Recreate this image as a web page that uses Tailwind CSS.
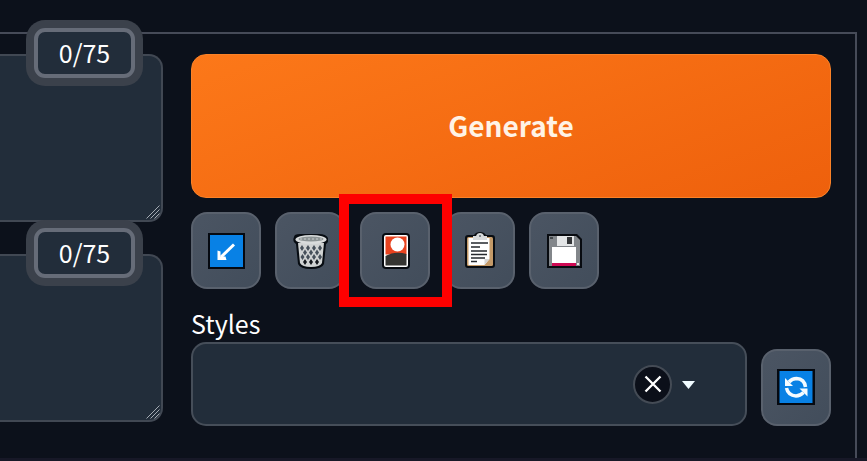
<!DOCTYPE html>
<html lang="en">
<head>
<meta charset="utf-8">
<title>Generate</title>
<script src="https://cdn.jsdelivr.net/npm/@tailwindcss/browser@4"></script>
</head>
<body class="w-[867px] h-[461px] overflow-hidden bg-[#0c111b] text-white font-['Noto_Sans_CJK_SC','Noto_Sans',sans-serif]">
<div class="h-[461px] pt-8 pr-[10px] flex flex-col">
  <main class="h-[426px] border-t-2 border-r-2 border-[#464b58] pt-5 pr-6 flex gap-7">
    <section class="w-[163px] shrink-0 flex flex-col gap-8">
      <div class="relative h-[168px] rounded-r-[14px] border-2 border-l-0 border-[#414853] bg-[#222d3a]">
        <svg class="absolute right-[1px] bottom-[1px] w-[14px] h-[14px]" viewBox="0 0 14 14" fill="none" stroke="#a5abb3" stroke-width="1"><path d="M0.5 13.5L13.5 .5M4.5 13.5L13.5 4.5M8.5 13.5L13.5 8.5"/></svg>
        <div class="absolute left-[34px] top-[-28px] w-[101px] h-[50px] rounded-[11px] border-4 border-[#666c78] bg-[#222d3a] shadow-[0_0_0_8px_#3b414b] flex items-center justify-center text-[25px] leading-none"><span class="-translate-y-px">0/75</span></div>
      </div>
      <div class="relative h-[168px] rounded-r-[14px] border-2 border-l-0 border-[#414853] bg-[#222d3a]">
        <svg class="absolute right-[1px] bottom-[1px] w-[14px] h-[14px]" viewBox="0 0 14 14" fill="none" stroke="#a5abb3" stroke-width="1"><path d="M0.5 13.5L13.5 .5M4.5 13.5L13.5 4.5M8.5 13.5L13.5 8.5"/></svg>
        <div class="absolute left-[34px] top-[-28px] w-[101px] h-[50px] rounded-[11px] border-4 border-[#666c78] bg-[#222d3a] shadow-[0_0_0_8px_#3b414b] flex items-center justify-center text-[25px] leading-none"><span class="-translate-y-px">0/75</span></div>
      </div>
    </section>
    <section class="w-[640px] shrink-0 flex flex-col">
      <button class="h-36 shrink-0 rounded-[15px] border border-[#fb8228] bg-linear-[160deg] from-[#fc7819] to-[#ee600c] pb-[3px] text-[28px] font-bold leading-none text-[#fff3e6]">Generate</button>
      <div class="mt-[14px] flex gap-[14.5px]">
        <button class="w-[70px] h-[77px] rounded-[16px] border-2 border-[#59616d] bg-linear-to-br from-[#4b5563] to-[#424d5b] flex items-center justify-center">
          <svg class="w-[38px] h-[38px]" viewBox="0 0 38 38"><path d="M1 1h37v36H1z" fill="#050910"/><path d="M3 3h33v32H3z" fill="#0881e5"/><path d="M27 12.500L14 25" fill="none" stroke="#fff" stroke-width="3"/><path d="M10.500 18.500l3 1v5h5l1 3.500h-9z" fill="#fff"/></svg>
        </button>
        <button class="-ml-[0.5px] mr-[0.5px] w-[70px] h-[77px] rounded-[16px] border-2 border-[#59616d] bg-linear-to-br from-[#4b5563] to-[#424d5b] flex items-center justify-center">
          <svg class="w-[38px] h-[38px] -translate-x-px" viewBox="0 0 38 38">
            <path d="M4 5Q4 2 10 2H29Q36 2 38 6Q39 10 36 12L34 32Q32 37 21 37Q10 37 8 32L6 12Q2 10 4 5Z" fill="#070c12"/>
            <path d="M8 11L10 31Q12 35 21 35Q30 35 32 31L34 11Z" fill="#d0d3d3"/>
            <g fill="#46505a"><path d="M12 13l2 3-2 3-2-3zm6 0l2 3-2 3-2-3zm6 0l2 3-2 3-2-3zm6 0l2 3-2 3-2-3zM15 17.500l2 3-2 3-2-3zm6 0l2 3-2 3-2-3zm6 0l2 3-2 3-2-3zM12.500 22l2 3-2 3-2-3zm5.500 0l2 3-2 3-2-3zm6 0l2 3-2 3-2-3zm6 0l2 3-2 3-2-3z"/></g>
            <path d="M15 27l2 3-2 3-2-3zm6 0l2 3-2 3-2-3zm6 0l2 3-2 3-2-3z" fill="#15191e"/>
            <ellipse cx="21" cy="7.500" rx="15.500" ry="4.500" fill="#d9dcdc"/><ellipse cx="21" cy="7" rx="12.500" ry="2.500" fill="#8d9495"/><path d="M10 7h22" stroke="#c8cccc" stroke-dasharray="2 2"/>
          </svg>
        </button>
        <button class="relative w-[70px] h-[77px] rounded-[16px] border-2 border-[#59616d] bg-linear-to-br from-[#4b5563] to-[#424d5b] flex items-center justify-center">
          <svg class="w-[38px] h-[38px] translate-x-px" viewBox="0 0 38 38">
            <rect x="5" y="1" width="28" height="36" rx="4" fill="#060a10"/><rect x="7" y="3" width="24" height="32" rx="2" fill="#fff"/><path d="M8.500 4.500h21v18h-21z" fill="#e8431f"/><path d="M8.500 24Q18 18.500 29.500 22V33.500h-21z" fill="#353532"/><circle cx="20.500" cy="12.500" r="7" fill="#fff"/>
          </svg>
          <span class="absolute z-10 left-[-23px] top-[-20px] w-[113px] h-[113px] border-[10px] border-[#fe0000]"></span>
        </button>
        <button class="w-[70px] h-[77px] rounded-[16px] border-2 border-[#59616d] bg-linear-to-br from-[#4b5563] to-[#424d5b] flex items-center justify-center">
          <svg class="w-[38px] h-[38px] -translate-x-px" viewBox="0 0 38 38">
            <path d="M8 3h6q2-3 6-3t6 3h6q3 0 3 3v27q0 3-3 3H8q-3 0-3-3V6q0-3 3-3z" fill="#090d12"/><rect x="7" y="5" width="26" height="29" rx="1.500" fill="#c49a68"/><path d="M8.500 6h21v21l-5 6h-16z" fill="#fff"/><path d="M24.500 33v-6h5z" fill="#d5d5d5"/><path d="M13 4h3q1-3 4-3t4 3h3v4H13z" fill="#d8dadb"/><circle cx="20" cy="4" r="1" fill="#626970"/><path d="M11 11h17M11 15h9M11 19h16M11 22.500h16M11 26h14M11 29.500h6" stroke="#25292e" stroke-width="1.500"/>
          </svg>
        </button>
        <button class="w-[70px] h-[77px] rounded-[16px] border-2 border-[#59616d] bg-linear-to-br from-[#4b5563] to-[#424d5b] flex items-center justify-center">
          <svg class="w-[38px] h-[38px]" viewBox="0 0 38 38">
            <path d="M2 2h30l5 5v29H2z" fill="#080b10"/><path d="M4 4h27l4 4v26H4z" fill="#82868a"/><path d="M12 4h17v10H12z" fill="#e3e5e6"/><path d="M22 5h5v7h-5z" fill="#333537"/><path d="M7 15h24v17H7z" fill="#fff"/><path d="M7 31h24v3H7z" fill="#ce0953"/><path d="M5 5h3v2H5z" fill="#41464a"/><path d="M32 31h2v2h-2z" fill="#e8e8e8"/>
          </svg>
        </button>
      </div>
      <label class="mt-[19px] h-[34px] text-[25px] leading-[30px]">Styles</label>
      <div class="flex items-end gap-[14px]">
        <div class="w-[556px] h-[84px] rounded-[15px] border-2 border-[#464e59] bg-[#222d3a] pr-[50px] flex items-center justify-end gap-[10px]">
          <span class="w-[39px] h-[39px] rounded-full border-2 border-[#444b55] bg-[#0b0f19] flex items-center justify-center">
            <svg class="w-[18px] h-[18px]" viewBox="0 0 18 18"><path d="M1.500 1.500L16.500 16.500M16.500 1.500L1.500 16.500" stroke="#fff" stroke-width="2.300"/></svg>
          </span>
          <svg class="w-[13px] h-[8px] mt-[2px]" viewBox="0 0 13 8"><path d="M0 0h13L6.500 8z" fill="#f0fbff"/></svg>
        </div>
        <button class="w-[70px] h-[77px] rounded-[16px] border-2 border-[#59616d] bg-linear-to-br from-[#4b5563] to-[#424d5b] flex items-center justify-center">
          <svg class="w-[38px] h-[38px] -translate-y-px" viewBox="0 0 38 38"><path d="M0 1h38v36H0z" fill="#050910"/><path d="M2.500 3h33v32h-33z" fill="#0881e5"/><g fill="none" stroke="#f4fbff" stroke-width="3.500"><path d="M12 14Q15 10.500 19.500 10.500Q27.500 11 28.500 19"/><path d="M26.500 24.500Q23 28 19 28Q11 27.500 9.500 20"/></g><path d="M8 10v8h8zM30.500 28.500v-8h-8z" fill="#f4fbff"/></svg>
        </button>
      </div>
    </section>
  </main>
  <footer class="h-[3px] mr-[-10px] bg-[#171827]"></footer>
</div>
</body>
</html>
